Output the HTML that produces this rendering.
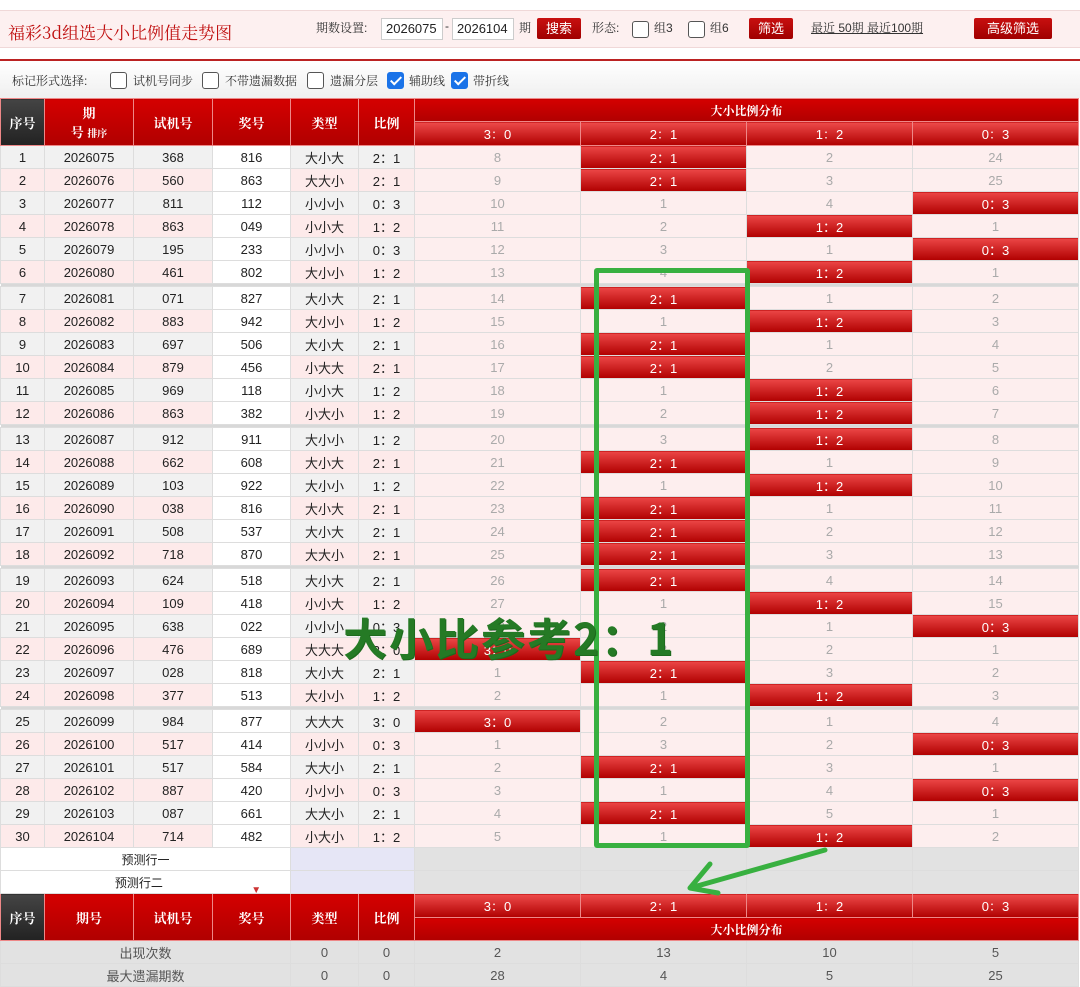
<!DOCTYPE html>
<html><head><meta charset="utf-8">
<style>
*{margin:0;padding:0;box-sizing:border-box}
body{width:1080px;height:974px;overflow:hidden;background:#fff;font-family:"Liberation Sans","Noto Sans CJK SC",sans-serif;font-size:13px;color:#222;position:relative}
.top{position:absolute;left:0;top:10px;width:1080px;height:38px;background:#fdf0f0;border-top:1px solid #f0d8d8;border-bottom:1px solid #f0d8d8}
.title{position:absolute;left:8px;top:8px;font-size:17px;color:#c01010;font-family:"Noto Serif CJK SC",serif}
.ctl{position:absolute;top:8px;font-size:12px;color:#333;font-family:"Liberation Sans","Noto Serif CJK SC",serif}
.inp{position:absolute;top:7px;height:22px;width:62px;border:1px solid #ccc;background:#fff;font-size:13px;padding:2px 4px}
.btn{position:absolute;top:7px;height:21px;background:linear-gradient(#c81010,#a00000);color:#fff;font-size:13px;text-align:center;line-height:21px;border-radius:2px}
.cb{position:absolute;width:17px;height:17px;border:1px solid #555;border-radius:3px;background:#fff}
.cb.on{background:#1a73e8;border-color:#1a73e8}
.cb.on:after{content:"";position:absolute;left:5px;top:1px;width:4px;height:9px;border:solid #fff;border-width:0 2px 2px 0;transform:rotate(45deg)}
.rl{position:absolute;top:59px;left:0;width:1080px;height:2px;background:#b22}
.bar2{position:absolute;top:61px;left:0;width:1080px;height:37px;background:linear-gradient(#fff,#efefef)}
.lbl{position:absolute;top:72px;font-size:12px;color:#333;font-family:"Liberation Sans","Noto Serif CJK SC",serif}
table{position:absolute;left:0;top:98px;border-collapse:collapse;table-layout:fixed;width:1078px}
td{height:23px;text-align:center;border:1px solid #ddd;padding:0;white-space:nowrap;overflow:hidden;font-size:13px}
.h td{background:linear-gradient(#d40000,#b00000);color:#fff;font-weight:bold;border-color:#e88;font-family:"Liberation Sans","Noto Serif CJK SC",serif}
.h td.dk{background:linear-gradient(#444,#222)}
.h td.sub{background:linear-gradient(#ee4a4a,#b00000);font-weight:normal;height:24px}
tr.o td{background:#f1f1f1}
tr.e td{background:#fdeaea}
tr td.w{background:#fff}
tr td.d{background:#fdeeee;color:#aaa}
tr td.x{background:linear-gradient(#ec4646,#b00000);color:#fff}
tr.sp td{height:3px;background:#d8d8d8;border:0}
tr.p td{background:#fff;font-size:12px}
tr.p td.lv{background:#e6e6f6}
tr.p td.g{background:#e2e2e2}
tr.s td{background:#e2e2e2;color:#555}
.box{position:absolute;left:594px;top:268px;width:156px;height:580px;border:5px solid #38b040;border-radius:3px}
.big{position:absolute;left:343px;top:604px;font-size:44px;font-weight:bold;color:#257a25;font-family:"WenQuanYi Zen Hei","Noto Sans CJK SC",sans-serif;letter-spacing:2px;text-shadow:1px 1px 0 #1d6a1d}
</style></head><body>
<div class="top">
<div class="title">福彩3d组选大小比例值走势图</div>
<div class="ctl" style="left:316px">期数设置:</div>
<div class="inp" style="left:381px">2026075</div>
<div class="ctl" style="left:445px">-</div>
<div class="inp" style="left:452px">2026104</div>
<div class="ctl" style="left:519px">期</div>
<div class="btn" style="left:537px;width:44px">搜索</div>
<div class="ctl" style="left:592px">形态:</div>
<div class="cb" style="left:632px;top:10px"></div><div class="ctl" style="left:654px">组3</div>
<div class="cb" style="left:688px;top:10px"></div><div class="ctl" style="left:710px">组6</div>
<div class="btn" style="left:749px;width:44px">筛选</div>
<div class="ctl" style="left:811px;text-decoration:underline">最近 50期 最近100期</div>
<div class="btn" style="left:974px;width:78px">高级筛选</div>
</div>
<div class="rl"></div><div class="bar2"></div>
<div class="lbl" style="left:12px">标记形式选择:</div>
<div class="cb" style="left:110px;top:72px"></div><div class="lbl" style="left:133px">试机号同步</div>
<div class="cb" style="left:202px;top:72px"></div><div class="lbl" style="left:225px">不带遗漏数据</div>
<div class="cb" style="left:307px;top:72px"></div><div class="lbl" style="left:330px">遗漏分层</div>
<div class="cb on" style="left:387px;top:72px"></div><div class="lbl" style="left:409px">辅助线</div>
<div class="cb on" style="left:451px;top:72px"></div><div class="lbl" style="left:473px">带折线</div>
<table>
<colgroup><col style="width:44px"><col style="width:89px"><col style="width:79px"><col style="width:78px"><col style="width:68px"><col style="width:56px"><col style="width:166px"><col style="width:166px"><col style="width:166px"><col style="width:166px"></colgroup>
<tr class="h"><td class="dk" rowspan="2">序号</td><td rowspan="2">期<br>号 <span style="font-size:10px">排序</span></td><td rowspan="2">试机号</td><td rowspan="2">奖号</td><td rowspan="2">类型</td><td rowspan="2">比例</td><td colspan="4" style="font-size:12px">大小比例分布</td></tr>
<tr class="h"><td class="sub">3：0</td><td class="sub">2：1</td><td class="sub">1：2</td><td class="sub">0：3</td></tr>
<tr class="o"><td>1</td><td>2026075</td><td>368</td><td class="w">816</td><td>大小大</td><td>2：1</td><td class="d">8</td><td class="x">2：1</td><td class="d">2</td><td class="d">24</td></tr>
<tr class="e"><td>2</td><td>2026076</td><td>560</td><td class="w">863</td><td>大大小</td><td>2：1</td><td class="d">9</td><td class="x">2：1</td><td class="d">3</td><td class="d">25</td></tr>
<tr class="o"><td>3</td><td>2026077</td><td>811</td><td class="w">112</td><td>小小小</td><td>0：3</td><td class="d">10</td><td class="d">1</td><td class="d">4</td><td class="x">0：3</td></tr>
<tr class="e"><td>4</td><td>2026078</td><td>863</td><td class="w">049</td><td>小小大</td><td>1：2</td><td class="d">11</td><td class="d">2</td><td class="x">1：2</td><td class="d">1</td></tr>
<tr class="o"><td>5</td><td>2026079</td><td>195</td><td class="w">233</td><td>小小小</td><td>0：3</td><td class="d">12</td><td class="d">3</td><td class="d">1</td><td class="x">0：3</td></tr>
<tr class="e"><td>6</td><td>2026080</td><td>461</td><td class="w">802</td><td>大小小</td><td>1：2</td><td class="d">13</td><td class="d">4</td><td class="x">1：2</td><td class="d">1</td></tr>
<tr class="sp"><td colspan="10"></td></tr>
<tr class="o"><td>7</td><td>2026081</td><td>071</td><td class="w">827</td><td>大小大</td><td>2：1</td><td class="d">14</td><td class="x">2：1</td><td class="d">1</td><td class="d">2</td></tr>
<tr class="e"><td>8</td><td>2026082</td><td>883</td><td class="w">942</td><td>大小小</td><td>1：2</td><td class="d">15</td><td class="d">1</td><td class="x">1：2</td><td class="d">3</td></tr>
<tr class="o"><td>9</td><td>2026083</td><td>697</td><td class="w">506</td><td>大小大</td><td>2：1</td><td class="d">16</td><td class="x">2：1</td><td class="d">1</td><td class="d">4</td></tr>
<tr class="e"><td>10</td><td>2026084</td><td>879</td><td class="w">456</td><td>小大大</td><td>2：1</td><td class="d">17</td><td class="x">2：1</td><td class="d">2</td><td class="d">5</td></tr>
<tr class="o"><td>11</td><td>2026085</td><td>969</td><td class="w">118</td><td>小小大</td><td>1：2</td><td class="d">18</td><td class="d">1</td><td class="x">1：2</td><td class="d">6</td></tr>
<tr class="e"><td>12</td><td>2026086</td><td>863</td><td class="w">382</td><td>小大小</td><td>1：2</td><td class="d">19</td><td class="d">2</td><td class="x">1：2</td><td class="d">7</td></tr>
<tr class="sp"><td colspan="10"></td></tr>
<tr class="o"><td>13</td><td>2026087</td><td>912</td><td class="w">911</td><td>大小小</td><td>1：2</td><td class="d">20</td><td class="d">3</td><td class="x">1：2</td><td class="d">8</td></tr>
<tr class="e"><td>14</td><td>2026088</td><td>662</td><td class="w">608</td><td>大小大</td><td>2：1</td><td class="d">21</td><td class="x">2：1</td><td class="d">1</td><td class="d">9</td></tr>
<tr class="o"><td>15</td><td>2026089</td><td>103</td><td class="w">922</td><td>大小小</td><td>1：2</td><td class="d">22</td><td class="d">1</td><td class="x">1：2</td><td class="d">10</td></tr>
<tr class="e"><td>16</td><td>2026090</td><td>038</td><td class="w">816</td><td>大小大</td><td>2：1</td><td class="d">23</td><td class="x">2：1</td><td class="d">1</td><td class="d">11</td></tr>
<tr class="o"><td>17</td><td>2026091</td><td>508</td><td class="w">537</td><td>大小大</td><td>2：1</td><td class="d">24</td><td class="x">2：1</td><td class="d">2</td><td class="d">12</td></tr>
<tr class="e"><td>18</td><td>2026092</td><td>718</td><td class="w">870</td><td>大大小</td><td>2：1</td><td class="d">25</td><td class="x">2：1</td><td class="d">3</td><td class="d">13</td></tr>
<tr class="sp"><td colspan="10"></td></tr>
<tr class="o"><td>19</td><td>2026093</td><td>624</td><td class="w">518</td><td>大小大</td><td>2：1</td><td class="d">26</td><td class="x">2：1</td><td class="d">4</td><td class="d">14</td></tr>
<tr class="e"><td>20</td><td>2026094</td><td>109</td><td class="w">418</td><td>小小大</td><td>1：2</td><td class="d">27</td><td class="d">1</td><td class="x">1：2</td><td class="d">15</td></tr>
<tr class="o"><td>21</td><td>2026095</td><td>638</td><td class="w">022</td><td>小小小</td><td>0：3</td><td class="d">28</td><td class="d">2</td><td class="d">1</td><td class="x">0：3</td></tr>
<tr class="e"><td>22</td><td>2026096</td><td>476</td><td class="w">689</td><td>大大大</td><td>3：0</td><td class="x">3：0</td><td class="d">3</td><td class="d">2</td><td class="d">1</td></tr>
<tr class="o"><td>23</td><td>2026097</td><td>028</td><td class="w">818</td><td>大小大</td><td>2：1</td><td class="d">1</td><td class="x">2：1</td><td class="d">3</td><td class="d">2</td></tr>
<tr class="e"><td>24</td><td>2026098</td><td>377</td><td class="w">513</td><td>大小小</td><td>1：2</td><td class="d">2</td><td class="d">1</td><td class="x">1：2</td><td class="d">3</td></tr>
<tr class="sp"><td colspan="10"></td></tr>
<tr class="o"><td>25</td><td>2026099</td><td>984</td><td class="w">877</td><td>大大大</td><td>3：0</td><td class="x">3：0</td><td class="d">2</td><td class="d">1</td><td class="d">4</td></tr>
<tr class="e"><td>26</td><td>2026100</td><td>517</td><td class="w">414</td><td>小小小</td><td>0：3</td><td class="d">1</td><td class="d">3</td><td class="d">2</td><td class="x">0：3</td></tr>
<tr class="o"><td>27</td><td>2026101</td><td>517</td><td class="w">584</td><td>大大小</td><td>2：1</td><td class="d">2</td><td class="x">2：1</td><td class="d">3</td><td class="d">1</td></tr>
<tr class="e"><td>28</td><td>2026102</td><td>887</td><td class="w">420</td><td>小小小</td><td>0：3</td><td class="d">3</td><td class="d">1</td><td class="d">4</td><td class="x">0：3</td></tr>
<tr class="o"><td>29</td><td>2026103</td><td>087</td><td class="w">661</td><td>大大小</td><td>2：1</td><td class="d">4</td><td class="x">2：1</td><td class="d">5</td><td class="d">1</td></tr>
<tr class="e"><td>30</td><td>2026104</td><td>714</td><td class="w">482</td><td>小大小</td><td>1：2</td><td class="d">5</td><td class="d">1</td><td class="x">1：2</td><td class="d">2</td></tr>
<tr class="p"><td colspan="4">预测行一</td><td class="lv" colspan="2"></td><td class="g"></td><td class="g"></td><td class="g"></td><td class="g"></td></tr>
<tr class="p"><td colspan="4">预测行二 <span style="color:#c33;position:relative;left:85px;top:6px;font-size:10px">▼</span></td><td class="lv" colspan="2"></td><td class="g"></td><td class="g"></td><td class="g"></td><td class="g"></td></tr>
<tr class="h"><td class="dk" rowspan="2">序号</td><td rowspan="2">期号</td><td rowspan="2">试机号</td><td rowspan="2">奖号</td><td rowspan="2">类型</td><td rowspan="2">比例</td><td class="sub">3：0</td><td class="sub">2：1</td><td class="sub">1：2</td><td class="sub">0：3</td></tr>
<tr class="h"><td colspan="4" style="font-size:12px">大小比例分布</td></tr>
<tr class="s"><td colspan="4">出现次数</td><td>0</td><td>0</td><td>2</td><td>13</td><td>10</td><td>5</td></tr>
<tr class="s"><td colspan="4">最大遗漏期数</td><td>0</td><td>0</td><td>28</td><td>4</td><td>5</td><td>25</td></tr>
</table>
<div class="box"></div>
<div class="big">大小比参考2：1</div>
<svg style="position:absolute;left:0;top:0" width="1080" height="974"><path d="M825 850 L690 888 M690 888 L710 864 M690 888 L718 893" stroke="#38b040" stroke-width="5" fill="none" stroke-linecap="round"/></svg>
</body></html>
